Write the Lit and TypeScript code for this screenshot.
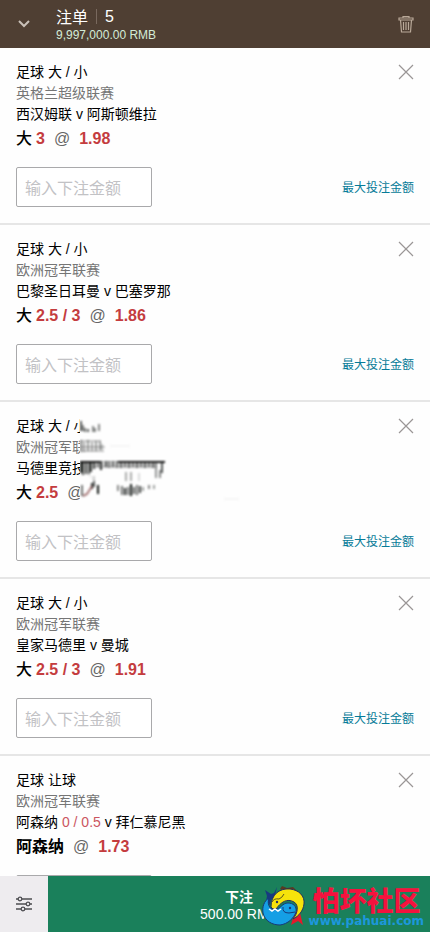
import { LitElement, html, css, svg, nothing } from "lit";
import { customElement, property } from "lit/decorators.js";

interface Bet {
  market: string;
  league: string;
  home: string;
  handicap?: string;
  away: string;
  pick: string;
  line?: string;
  odds: string;
  smudged?: boolean;
}

const BETS: Bet[] = [
  { market: "足球 大 / 小", league: "英格兰超级联赛", home: "西汉姆联", away: "阿斯顿维拉", pick: "大", line: "3", odds: "1.98" },
  { market: "足球 大 / 小", league: "欧洲冠军联赛", home: "巴黎圣日耳曼", away: "巴塞罗那", pick: "大", line: "2.5 / 3", odds: "1.86" },
  { market: "足球 大 / 小", league: "欧洲冠军联赛", home: "马德里竞技", away: "", pick: "大", line: "2.5", odds: "", smudged: true },
  { market: "足球 大 / 小", league: "欧洲冠军联赛", home: "皇家马德里", away: "曼城", pick: "大", line: "2.5 / 3", odds: "1.91" },
  { market: "足球 让球", league: "欧洲冠军联赛", home: "阿森纳", handicap: "0 / 0.5", away: "拜仁慕尼黑", pick: "阿森纳", odds: "1.73" },
];

/* Vertical streaks of the smudge: x, top, height, opacity. */
const STREAKS: number[][] = [
  [1, 5, 10, 0.7], [3, 9, 6, 0.5], [5, 12, 4, 0.6], [8, 13, 3, 0.7], [13, 10, 6, 0.5], [15, 12, 4, 0.5], [19, 8, 7, 0.5],
  [1, 24, 12, 0.5], [4, 26, 10, 0.35], [8, 24, 11, 0.4], [12, 26, 9, 0.35], [16, 25, 10, 0.4], [20, 25, 9, 0.4], [22, 28, 6, 0.25],
  [1, 45, 12, 0.9], [3, 47, 12, 0.8], [6, 45, 13, 0.8], [9, 45, 13, 0.7], [11, 46, 10, 0.8], [14, 45, 8, 0.8], [18, 45, 6, 0.5],
  [21, 45, 9, 0.9], [26, 45, 6, 0.7], [29, 45, 7, 0.5], [33, 45, 6, 0.6], [37, 45, 7, 0.5], [41, 45, 7, 0.6], [45, 45, 6, 0.5],
  [49, 45, 7, 0.6], [53, 45, 6, 0.5], [57, 45, 7, 0.6], [61, 45, 6, 0.5], [65, 45, 7, 0.6], [69, 45, 6, 0.5], [73, 45, 7, 0.6],
  [76, 45, 17, 0.45], [82, 45, 12, 0.7], [80, 54, 8, 0.5],
  [46, 56, 9, 0.35], [51, 56, 9, 0.35], [59, 57, 8, 0.15], [14, 60, 10, 0.2],
  [2, 69, 11, 0.6], [12, 67, 6, 0.9], [14, 65, 6, 0.7], [18, 69, 9, 1],
  [38, 69, 6, 0.5], [42, 70, 9, 0.6], [45, 72, 7, 0.9], [48, 71, 8, 0.6], [51, 68, 12, 1], [54, 71, 7, 0.7], [57, 69, 10, 0.6], [60, 70, 7, 0.8],
  [63, 71, 4, 0.4], [69, 69, 4, 0.5], [74, 69, 4, 0.4],
];

@customElement("bet-card")
export class BetCard extends LitElement {
  @property({ attribute: false }) bet!: Bet;

  static styles = css`
    :host {
      display: block;
      flex: none;
      position: relative;
      padding: 14px 16px 16px;
      border-bottom: 2px solid #e6e6e6;
      background: #fefefe;
      color: #000;
      font-size: 14px;
      line-height: 21px;
    }
    .head { display: flex; justify-content: space-between; height: 21px; }
    .row, .league { height: 21px; white-space: nowrap; }
    .league { color: #757575; }
    .red { color: #c43c3e; }
    .row .red { color: #cb5560; }
    .pick {
      display: flex;
      align-items: center;
      height: 27px;
      font-size: 16px;
      font-weight: 500;
      white-space: nowrap;
    }
    .pick .red { font-weight: 700; }
    .line { margin-left: 4px; }
    .at { margin: 0 9px; color: #666; font-weight: 400; }
    .team { font-weight: 700; }
    .stake { display: flex; align-items: center; justify-content: space-between; margin-top: 15px; }
    input {
      box-sizing: border-box;
      width: 136px;
      height: 40px;
      padding: 3px 8px 0;
      border: 1px solid #a9a9ab;
      border-radius: 2px;
      background: #fff;
      color: #000;
      font: inherit;
      font-size: 16px;
    }
    input::placeholder { color: #c2c2c5; opacity: 1; }
    button { padding: 0; border: 0; background: none; font: inherit; cursor: pointer; }
    .close { display: flex; margin-top: 2px; height: 16px; }
    .max { padding-top: 2px; color: #067b98; font-size: 12px; }
    .smudge { position: absolute; left: 80px; top: 14px; width: 170px; height: 92px; background: #fefefe; }
    .smudge svg { display: block; }
    .soft { filter: blur(1px); }
  `;

  render() {
    const b = this.bet;
    return html`
      <div class="head">
        <span>${b.market}</span>
        <button class="close" aria-label="移除">
          <svg width="16" height="16" viewBox="0 0 16 16" fill="none" stroke="#9a9696" stroke-width="1.2">
            <path d="M1 1 15 15M15 1 1 15" />
          </svg>
        </button>
      </div>
      <div class="league">${b.league}</div>
      <div class="row">
        ${b.home}${b.handicap ? html` <span class="red">${b.handicap}</span>` : nothing}${b.away ? ` v ${b.away}` : nothing}
      </div>
      <div class="pick">
        <span class=${b.line ? "" : "team"}>${b.pick}</span>
        ${b.line ? html`<span class="red line">${b.line}</span>` : nothing}
        <span class="at">@</span>
        <span class="red">${b.odds}</span>
      </div>
      <div class="stake">
        <input type="text" inputmode="decimal" placeholder="输入下注金额" aria-label="输入下注金额" />
        <button class="max">最大投注金额</button>
      </div>
      ${b.smudged ? this.smudge() : nothing}
    `;
  }

  private smudge() {
    return html`<div class="smudge" aria-hidden="true">
      <svg width="170" height="92" viewBox="0 0 170 92" fill="none">
        <g class="soft">
          ${STREAKS.map(([x, y, h, o]) => svg`<path d="M${x} ${y}v${h}" stroke="#101412" stroke-width="2" opacity=${o} />`)}
          <path d="M1 25h20M1 31h24M2 35h22" stroke="#444" opacity=".6" />
          <path d="M0 46h20M38 46h47" stroke="#111" stroke-width="2" />
          <path d="M20 46h18" stroke="#444" opacity=".7" />
          <path d="M15 50h62" stroke="#555" stroke-width="4" opacity=".35" />
          <path d="M1 57Q14 58 14 67Q11 76 2 81" stroke="#bbb" opacity=".5" />
          <path d="M3 80 7 78 12 70" stroke="#8b4a4a" stroke-width="2" opacity=".7" />
          <path d="M30 30h20M144 83h15" stroke="#ddd" opacity=".5" />
        </g>
      </svg>
    </div>`;
  }
}

@customElement("site-badge")
export class SiteBadge extends LitElement {
  static styles = css`
    :host { display: flex; align-items: center; gap: 3px; pointer-events: none; }
    .words { display: flex; flex-direction: column; }
    .name {
      margin-left: 4px;
      color: #f5123e;
      font: 900 27px/28px "Noto Sans CJK SC", sans-serif;
    }
    .url { color: #1d97dc; font: 700 12px/14px "DejaVu Sans", sans-serif; }
  `;

  render() {
    return html`
      <svg width="44" height="44" viewBox="0 0 44 44" aria-hidden="true">
        <path d="M3 5 9 9 12 8 15 2 13 11 9 15 8 20 4 16 5 11z" fill="#173a80" />
        <path d="M18 4 20 1 25 3 31 2 35 6 26 8z" fill="#5b3a20" />
        <path d="M32 27 37 24 41 40 36 36 29 40 31 33z" fill="#e5182b" />
        <path d="M7 13C2 16 0 22 1 28C3 36 10 40 18 40C26 39 32 33 34 27C35 21 31 18 26 18C20 18 19 24 12 25C7 24 5 18 7 13Z" fill="#159fe5" stroke="#173a78" />
        <path d="M9 22C9 10 17 3 28 4C37 5 43 11 42 19C41 26 37 31 31 34C36 28 37 20 32 17C25 13 19 17 14 24L11 24Z" fill="#f6e30b" stroke="#26325c" />
        <path d="M7 24 10 26 13 24 16 26 19 24" fill="none" stroke="#fff" stroke-width="1.5" />
        <path d="M10 17Q12 13 17 14Q20 13 22 9" fill="none" stroke="#5a5420" />
        <path d="M21 22Q20 28 27 28L33 27" fill="none" stroke="#173a78" />
        <circle cx="15" cy="17" r="1.2" fill="#26325c" />
        <circle cx="28" cy="23" r="1.2" fill="#173a78" />
      </svg>
      <div class="words">
        <span class="name">怕坏社区</span>
        <span class="url">www.pahuai.com</span>
      </div>
    `;
  }
}

@customElement("app-root")
export class AppRoot extends LitElement {
  static styles = css`
    :host {
      display: flex;
      flex-direction: column;
      height: 100vh;
      background: #fefefe;
      font-family: "Liberation Sans", "Noto Sans CJK SC", sans-serif;
    }
    button { padding: 0; border: 0; background: none; font: inherit; cursor: pointer; }
    header {
      display: flex;
      align-items: center;
      flex: none;
      box-sizing: border-box;
      height: 48px;
      padding-right: 16px;
      background: #4f3f33;
      color: #fff;
    }
    .fold { display: flex; align-items: center; justify-content: center; width: 48px; height: 48px; margin-right: 8px; }
    .summary { flex: 1; }
    .title { display: flex; align-items: center; height: 20px; margin-top: 1px; font-size: 16px; line-height: 20px; }
    .title h1 { margin: 0; padding-top: 2px; font: inherit; }
    .count { margin-left: 8px; padding-left: 8px; border-left: 1px solid #79695e; line-height: 15px; }
    .balance { color: #d3ecd7; font-size: 12px; line-height: 16px; }
    .trash { display: flex; }
    main { display: flex; flex-direction: column; flex: 1; min-height: 0; overflow-y: auto; scrollbar-width: none; }
    footer { position: relative; display: flex; flex: none; height: 56px; }
    .options { display: flex; align-items: center; justify-content: center; width: 48px; background: #eeecef; }
    .place {
      display: flex;
      flex-direction: column;
      align-items: center;
      justify-content: center;
      flex: 1;
      padding-top: 3px;
      background: #1a805b;
      color: #fff;
      font-size: 14px;
      line-height: 17px;
    }
    .place b { font-weight: 700; }
    site-badge { position: absolute; right: 6px; bottom: 3px; }
  `;

  render() {
    return html`
      <header>
        <button class="fold" aria-label="收起">
          <svg width="12" height="8" viewBox="0 0 12 8" fill="none" stroke="#c9c0b8" stroke-width="2">
            <path d="M1 1 6 6 11 1" />
          </svg>
        </button>
        <div class="summary">
          <div class="title"><h1>注单</h1><span class="count">5</span></div>
          <div class="balance">9,997,000.00 RMB</div>
        </div>
        <button class="trash" aria-label="清空">
          <svg width="16" height="18" viewBox="0 0 16 18" fill="none" stroke="#b9a999" stroke-width="1.2">
            <path d="M5 3V1.5h6V3M1 3h14v2H1zM2.5 5l1 12h9l1-12M5.5 7v8M8 7v8M10.5 7v8" />
          </svg>
        </button>
      </header>
      <main>${BETS.map((bet) => html`<bet-card .bet=${bet}></bet-card>`)}</main>
      <footer>
        <button class="options" aria-label="设置">
          <svg width="16" height="16" viewBox="0 0 16 16" fill="none" stroke="#4e4e52" stroke-width="1.3">
            <path d="M0 3h2M6 3h10M0 8h10M14 8h2M0 13h5M9 13h7" />
            <circle cx="4" cy="3" r="1.8" />
            <circle cx="12" cy="8" r="1.8" />
            <circle cx="7" cy="13" r="1.8" />
          </svg>
        </button>
        <button class="place"><b>下注</b><span>500.00 RMB</span></button>
        <site-badge></site-badge>
      </footer>
    `;
  }
}
